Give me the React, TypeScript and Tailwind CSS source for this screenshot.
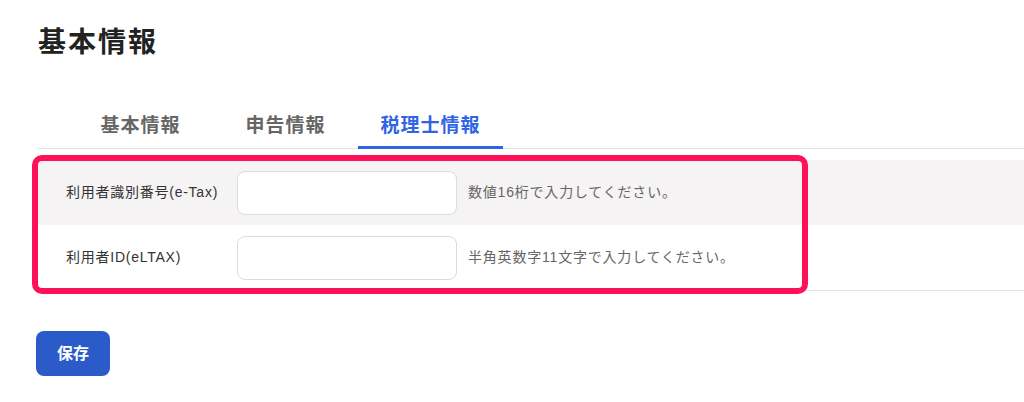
import React from 'react';

const font = { fontFamily: '"Liberation Sans", "Noto Sans CJK JP", sans-serif' };

const tabs = ['基本情報', '申告情報', '税理士情報'];

const rows = [
  { label: '利用者識別番号(e-Tax)', hint: '数値16桁で入力してください。', bg: 'bg-[#f5f3f3]' },
  { label: '利用者ID(eLTAX)', hint: '半角英数字11文字で入力してください。', bg: 'bg-white' },
];

export default function App() {
  const active = 2;

  return (
    <div className="min-h-[402px] w-[1024px] overflow-hidden bg-white font-['Liberation_Sans','Noto_Sans_CJK_JP',sans-serif]">
      <div className="pl-[38px]">
        <h1 className="pt-[21px] text-[28px] font-bold leading-[44px] tracking-[2px] text-[#222]">基本情報</h1>

        <div className="mt-[46px] flex border-b border-[#e3e3e3] pl-[30px]">
          {tabs.map((t, i) => (
            <div
              key={t}
              className={`-mb-px w-[145px] pb-[5px] text-center text-[19px] font-bold leading-[30px] tracking-[1px] ${
                i === active ? 'border-b-[3px] border-[#2f64e6] text-[#2f64e6]' : 'border-b-[3px] border-transparent text-[#666]'
              }`}
            >
              {t}
            </div>
          ))}
        </div>

        <div className="relative mt-[11px] border-b border-[#e3e3e3]">
          {rows.map((r) => (
            <div key={r.label} className={`flex h-[65px] items-center ${r.bg}`}>
              <div className="w-[199px] pl-[28px] text-[14px] tracking-[0.75px] text-[#333]">{r.label}</div>
              <input
                type="text"
                className="h-[44px] w-[220px] rounded-[8px] border border-[#dcdcdc] bg-white px-3 outline-none"
              />
              <div className="ml-[11px] text-[14px] tracking-[0.8px] text-[#666]">{r.hint}</div>
            </div>
          ))}
          <div className="pointer-events-none absolute left-[-6px] top-[-5px] h-[139px] w-[776px] rounded-[10px] border-[6px] border-[#ff1159]" />
        </div>

        <button
          type="button"
          className="ml-[-2px] mt-[40px] h-[45px] w-[74px] rounded-[8px] bg-[#2a5bc8] text-[16px] font-bold text-white"
          style={font}
        >
          保存
        </button>
      </div>
    </div>
  );
}
